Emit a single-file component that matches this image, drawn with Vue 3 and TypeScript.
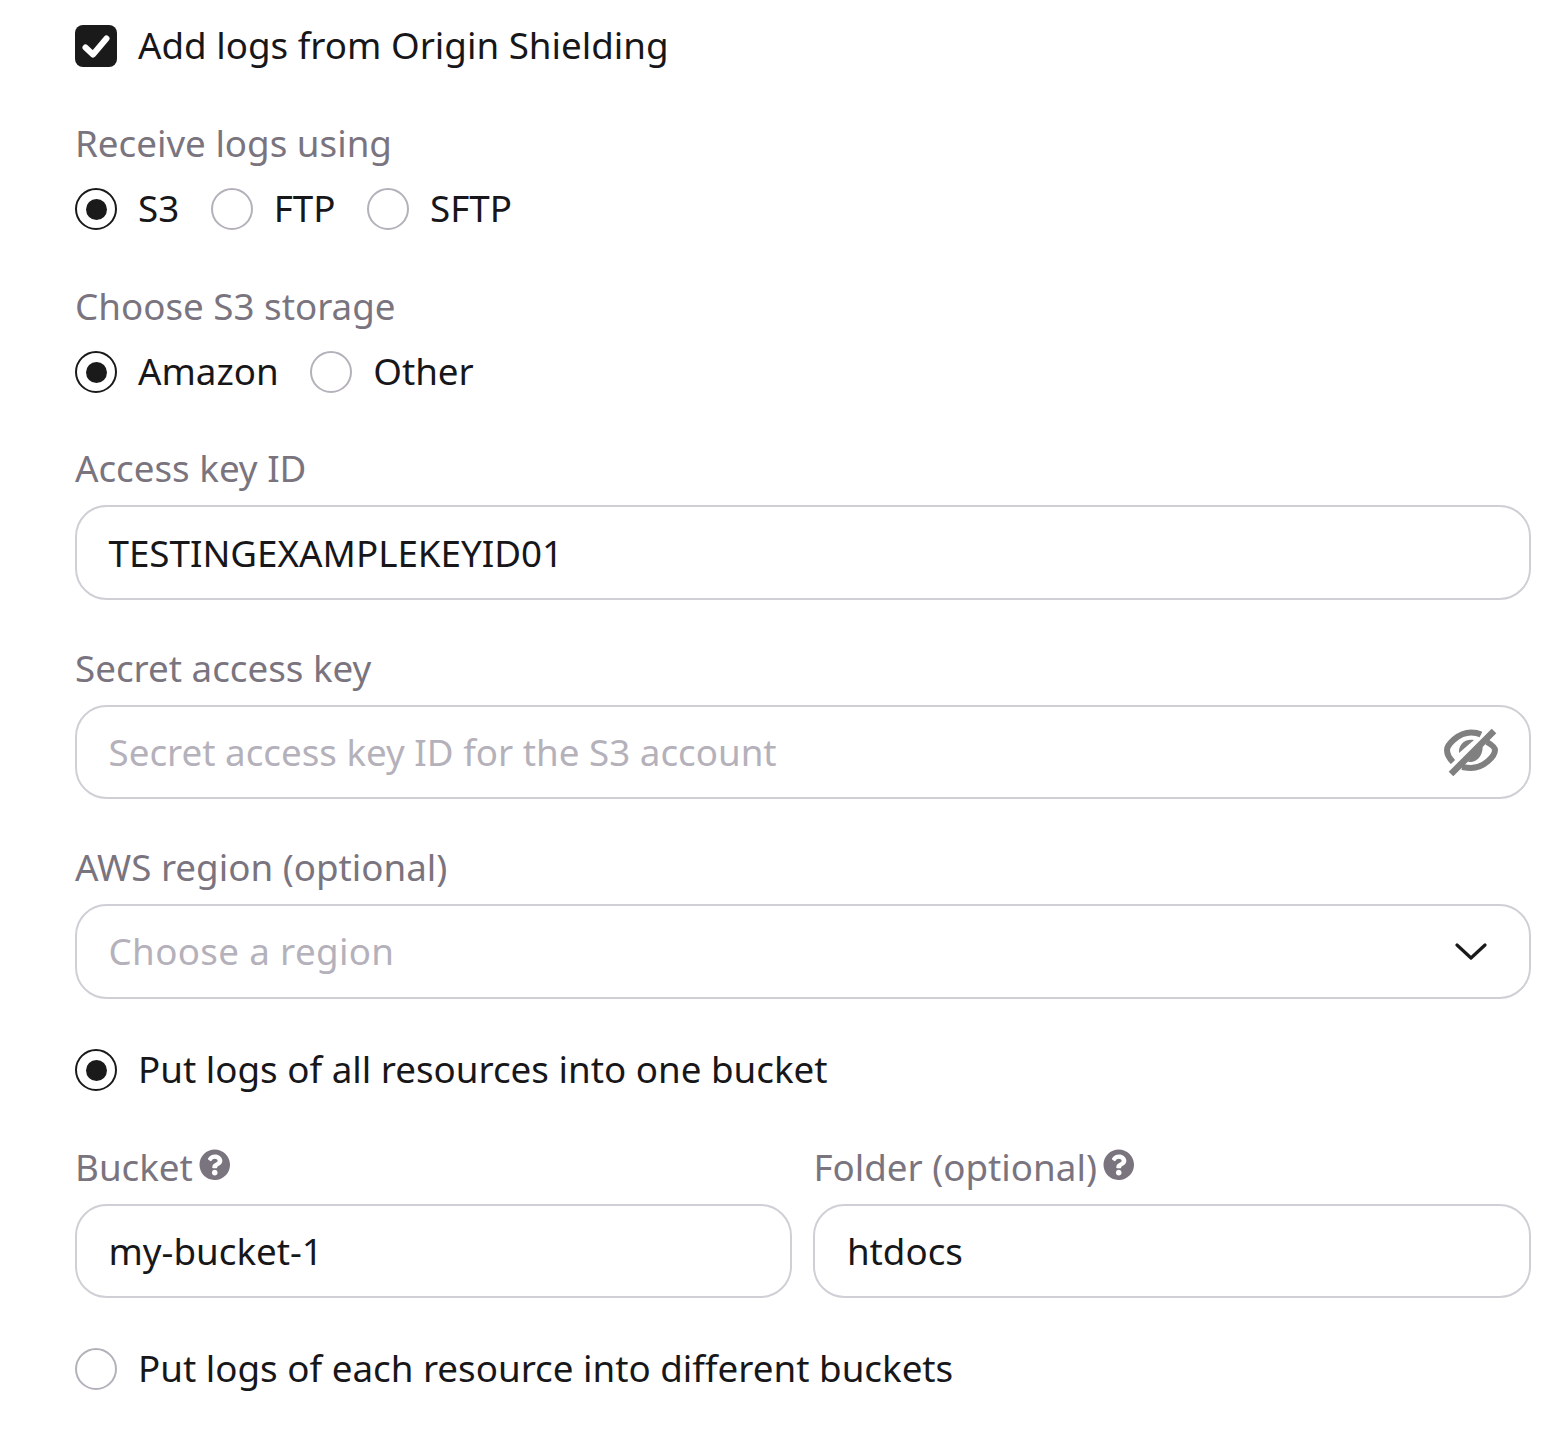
<script setup lang="ts">
interface Opt { text: string; on: boolean }
const receive: Opt[] = [
  { text: 'S3', on: true },
  { text: 'FTP', on: false },
  { text: 'SFTP', on: false },
]
const storage: Opt[] = [
  { text: 'Amazon', on: true },
  { text: 'Other', on: false },
]
const helpPath = 'M504 256c0 136.997-111.043 248-248 248S8 392.997 8 256C8 119.083 119.043 8 256 8s248 111.083 248 248zM262.655 90c-54.497 0-89.255 22.957-116.549 63.758-3.536 5.286-2.353 12.415 2.715 16.258l34.699 26.31c5.205 3.947 12.621 3.008 16.665-2.122 17.864-22.658 30.113-35.797 57.303-35.797 20.429 0 45.698 13.148 45.698 32.958 0 14.976-12.363 22.667-32.534 33.976C247.128 238.528 216 254.941 216 296v4c0 6.627 5.373 12 12 12h56c6.627 0 12-5.373 12-12v-1.333c0-28.462 83.186-29.647 83.186-106.667 0-58.002-60.165-102-116.531-102zM256 338c-25.365 0-46 20.635-46 46 0 25.364 20.635 46 46 46s46-20.636 46-46c0-25.365-20.635-46-46-46z'
</script>

<template>
  <div class="form">
    <div class="check-row">
      <span class="checkbox">
        <svg viewBox="0 0 42 42" width="42" height="42"><path d="M10.500 22.500 L18 29.500 L31.500 13.500" fill="none" stroke="#fff" stroke-width="6" stroke-linecap="round" stroke-linejoin="round" /></svg>
      </span>
      <span class="opt-text">Add logs from Origin Shielding</span>
    </div>

    <div class="label group">Receive logs using</div>
    <div class="radios">
      <div v-for="o in receive" :key="o.text" class="radio-row">
        <span class="radio" :class="{ on: o.on }"></span>
        <span class="opt-text">{{ o.text }}</span>
      </div>
    </div>

    <div class="label group">Choose S3 storage</div>
    <div class="radios">
      <div v-for="o in storage" :key="o.text" class="radio-row">
        <span class="radio" :class="{ on: o.on }"></span>
        <span class="opt-text">{{ o.text }}</span>
      </div>
    </div>

    <div class="label access tight">Access key ID</div>
    <div class="field h95"><span class="value">TESTINGEXAMPLEKEYID01</span></div>

    <div class="label secret tight">Secret access key</div>
    <div class="field h94">
      <span class="placeholder">Secret access key ID for the S3 account</span>
      <svg class="eye" viewBox="0 0 54 50" width="54" height="50">
        <path d="M9 35 C5 31 3 27 3 23 C3 18 14 5.500 27 5.500 C31 5.500 34 6 37 7.500" fill="none" stroke="#808080" stroke-width="6" />
        <path d="M43 15 C48 18 51 21 51 23 C51 29 40 41 27 41 C24 41 21 40.500 18 40" fill="none" stroke="#808080" stroke-width="6" />
        <path d="M15 26 C14 18 21 11 30 13 Z" fill="#808080" />
        <path d="M24 35 C33 36 41 28 38 14 Z" fill="#808080" />
        <path d="M7 47 L50 4" fill="none" stroke="#808080" stroke-width="6.500" />
      </svg>
    </div>

    <div class="label region tight">AWS region (optional)</div>
    <div class="field">
      <span class="placeholder select-text">Choose a region</span>
      <svg class="chevron" viewBox="0 0 32 18" width="32" height="18"><path d="M2 2 L16 15 L30 2" fill="none" stroke="#1a1a1a" stroke-width="3.200" stroke-linecap="round" stroke-linejoin="round" /></svg>
    </div>

    <div class="radio-row after-select">
      <span class="radio on"></span>
      <span class="opt-text">Put logs of all resources into one bucket</span>
    </div>

    <div class="columns">
      <div>
        <div class="label help-label">Bucket<svg class="help" viewBox="0 0 512 512" width="31.5" height="31.5"><path :d="helpPath" fill="#7a747f" /></svg></div>
        <div class="field"><span class="value">my-bucket-1</span></div>
      </div>
      <div>
        <div class="label help-label">Folder (optional)<svg class="help" viewBox="0 0 512 512" width="31.5" height="31.5"><path :d="helpPath" fill="#7a747f" /></svg></div>
        <div class="field"><span class="value">htdocs</span></div>
      </div>
    </div>

    <div class="radio-row last">
      <span class="radio"></span>
      <span class="opt-text">Put logs of each resource into different buckets</span>
    </div>
  </div>
</template>

<style>
body { background: #fff; }
</style>

<style scoped>
.form {
  box-sizing: border-box;
  height: 1429px;
  padding: 25px 29.25px 0 75px;
  display: flex;
  flex-direction: column;
  font-family: "Noto Sans", sans-serif;
  font-size: 36.75px;
  color: #17171a;
}
.check-row, .radio-row { display: flex; align-items: center; height: 42px; gap: 21px; }
.checkbox { width: 42px; height: 42px; border-radius: 8px; background: #1a1a1a; display: block; flex: none; }
.checkbox svg { display: block; }
.opt-text { line-height: 40px; margin-top: -2px; white-space: nowrap; }
.label { color: #7a747f; line-height: 52.5px; height: 52.5px; margin-bottom: 18.5px; white-space: nowrap; }
.label.group { margin-top: 50px; }
.label.access { margin-top: 49px; }
.label.secret { margin-top: 42px; }
.label.region { margin-top: 42px; }
.label.tight { margin-bottom: 10.5px; }
.radios { display: flex; gap: 31.5px; }
.radio { box-sizing: border-box; width: 42px; height: 42px; border-radius: 50%; border: 2.625px solid #b5b1bb; background: #fff; flex: none; display: flex; align-items: center; justify-content: center; }
.radio.on { border-color: #1a1a1a; }
.radio.on::after { content: ""; width: 21px; height: 21px; border-radius: 50%; background: #1a1a1a; }
.field {
  box-sizing: border-box;
  height: 94.5px;
  border: 2.625px solid #d1cfd6;
  border-radius: 31.5px;
  padding: 0 31.5px;
  display: flex;
  align-items: center;
  justify-content: space-between;
}
.field.h95 { height: 95px; }
.field.h94 { height: 94px; }
.value { color: #17171a; }
.placeholder { color: #b5b1bb; }
.select-text { letter-spacing: 0.35px; }
.eye { margin-right: -1px; }
.chevron { margin-right: 10px; margin-top: 1px; }
.after-select { margin-top: 50.5px; }
.columns { display: grid; grid-template-columns: 1fr 1fr; gap: 21px; margin-top: 49.5px; }
.help-label { display: flex; align-items: flex-start; gap: 6px; margin-bottom: 10.5px; }
.help { margin-top: 8px; flex: none; }
.last { margin-top: 50px; }
</style>
